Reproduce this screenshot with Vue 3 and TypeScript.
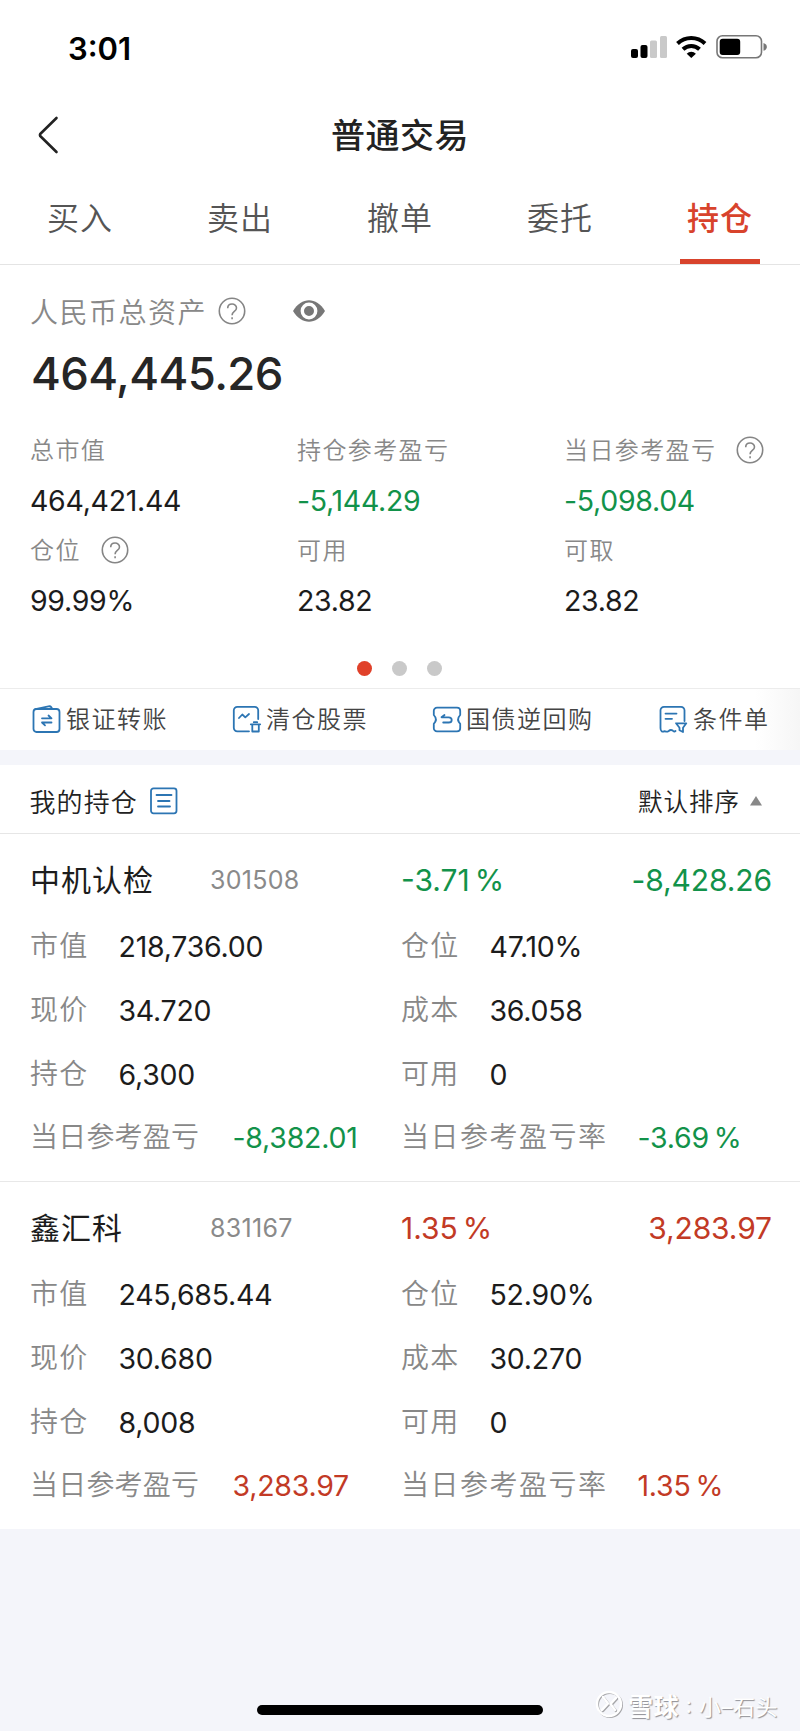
<script setup lang="ts">
interface Stat {
  label: string
  value: string
  help?: boolean
  down?: boolean
}
interface Holding {
  name: string
  code: string
  rate: string
  profit: string
  tone: 'up' | 'down'
  rows: [string, string, string, string][]
  dayProfit: string
  dayRate: string
}

const tabs = ['买入', '卖出', '撤单', '委托', '持仓']
const activeTab = '持仓'

const stats: Stat[] = [
  { label: '总市值', value: '464,421.44' },
  { label: '持仓参考盈亏', value: '-5,144.29', down: true },
  { label: '当日参考盈亏', value: '-5,098.04', help: true, down: true },
  { label: '仓位', value: '99.99%', help: true },
  { label: '可用', value: '23.82' },
  { label: '可取', value: '23.82' },
]

const holdings: Holding[] = [
  {
    name: '中机认检',
    code: '301508',
    rate: '-3.71',
    profit: '-8,428.26',
    tone: 'down',
    rows: [
      ['市值', '218,736.00', '仓位', '47.10%'],
      ['现价', '34.720', '成本', '36.058'],
      ['持仓', '6,300', '可用', '0'],
    ],
    dayProfit: '-8,382.01',
    dayRate: '-3.69',
  },
  {
    name: '鑫汇科',
    code: '831167',
    rate: '1.35',
    profit: '3,283.97',
    tone: 'up',
    rows: [
      ['市值', '245,685.44', '仓位', '52.90%'],
      ['现价', '30.680', '成本', '30.270'],
      ['持仓', '8,008', '可用', '0'],
    ],
    dayProfit: '3,283.97',
    dayRate: '1.35',
  },
]
</script>

<template>
  <main class="screen">
    <div class="status">
      <span class="clock">3:01</span>
      <svg class="status-icons" width="138" height="26" viewBox="0 0 138 26">
        <rect x="1" y="14" width="7" height="9" rx="2" />
        <rect x="10.500" y="10" width="7" height="13" rx="2" />
        <rect x="20" y="5.500" width="7" height="17.500" rx="1.500" fill="#c9c9c9" />
        <rect x="30" y="1" width="7" height="22" rx="1.500" fill="#c9c9c9" />
        <g fill="none" stroke="#000" stroke-width="4">
          <path d="M47.500 8.500a20 20 0 0 1 27.500 0" />
          <path d="M53 14.200a12 12 0 0 1 16.500 0" />
        </g>
        <path d="M56.700 18.700a6.500 6.500 0 0 1 9.200 0L61.300 23z" />
        <rect x="87" y="0.800" width="44.500" height="22" rx="5.500" fill="#fff" stroke="#777" stroke-width="1.600" />
        <rect x="89.700" y="3.800" width="20.500" height="16.200" rx="3" />
        <path d="M133.500 8c4.500 1.200 4.500 6.600 0 7.800z" fill="#777" />
      </svg>
    </div>

    <header class="nav">
      <svg class="back" width="22" height="40" viewBox="0 0 22 40">
        <path d="M19.500 3 3.200 19a2 2 0 0 0 0 2L19.500 37" fill="none" stroke="#222" stroke-width="2.600" stroke-linecap="round" stroke-linejoin="round" />
      </svg>
      <h1>普通交易</h1>
    </header>

    <nav class="tabs">
      <div v-for="t in tabs" :key="t" class="tab" :class="{ active: t === activeTab }">
        <span>{{ t }}</span>
      </div>
    </nav>

    <section class="assets">
      <div class="asset-title">
        <span>人民币总资产</span>
        <svg class="help" width="28" height="28" viewBox="0 0 28 28">
          <circle cx="14" cy="14" r="12.700" />
          <path d="M9.700 11.200c0-5.600 8.800-5.400 8.800-.2 0 3.600-4.400 3.400-4.400 7.200M14.100 20.300v2" />
        </svg>
        <svg class="eye" width="34" height="24" viewBox="0 0 34 24">
          <path d="M1 12C9.500-2.300 24.500-2.300 33 12 24.500 26.300 9.500 26.300 1 12z" fill="#777" />
          <circle cx="17" cy="12" r="6.700" fill="#777" stroke="#fff" stroke-width="3.400" />
        </svg>
      </div>
      <div class="total">464,445.26</div>
      <div class="stats">
        <div v-for="s in stats" :key="s.label" class="stat">
          <div class="stat-label">
            <span>{{ s.label }}</span>
            <svg v-if="s.help" class="help" width="28" height="28" viewBox="0 0 28 28">
              <circle cx="14" cy="14" r="12.700" />
              <path d="M9.700 11.200c0-5.600 8.800-5.400 8.800-.2 0 3.600-4.400 3.400-4.400 7.200M14.100 20.300v2" />
            </svg>
          </div>
          <div class="stat-value" :class="{ down: s.down }">{{ s.value }}</div>
        </div>
      </div>
      <div class="dots"><i class="on"></i><i></i><i></i></div>
    </section>

    <section class="actions">
      <div class="action">
        <svg width="30" height="30" viewBox="0 0 30 30">
          <rect x="1.500" y="4" width="26" height="23" rx="3" />
          <path d="M3.500 4.200 16.500 1.300q2-.3 2.800 1l1 1.700M10 13.300h9.500l-3-2.800M19.500 17.500h-9.500l3 2.800" />
        </svg>
        <span>银证转账</span>
      </div>
      <div class="action">
        <svg width="30" height="30" viewBox="0 0 30 30">
          <path d="M17 26.300H5.300a3.500 3.500 0 0 1-3.500-3.500V5.300a3.500 3.500 0 0 1 3.500-3.500h17.400a3.500 3.500 0 0 1 3.500 3.500V14M7 13l3.300-3.500 3 2.800 3.700-3.300" />
          <path d="M18.800 19.300h9.400M21.800 17.200h3.400M20.300 19.500v7h6.500v-7" />
        </svg>
        <span>清仓股票</span>
      </div>
      <div class="action">
        <svg width="30" height="30" viewBox="0 0 30 30">
          <path d="M5 2.600h20a3.200 3.200 0 0 1 3.200 3.200V10q-4.200 4.400 0 8.800v4.400a3.200 3.200 0 0 1-3.200 3.200H5a3.200 3.200 0 0 1-3.200-3.200v-4.400q4.200-4.400 0-8.800V5.800A3.200 3.200 0 0 1 5 2.600z" />
          <path d="M12.500 10 9.500 12.300h7.200c4 0 4 5.200 0 5.200h-5.500" />
        </svg>
        <span>国债逆回购</span>
      </div>
      <div class="action">
        <svg width="30" height="30" viewBox="0 0 30 30">
          <path d="M16.500 26q-1.200 1.200-2.800-.4-2 -1.400-4 .4-1.900 1.300-3.700.2Q1.500 28 1.500 23V5.300A3.500 3.500 0 0 1 5 1.800h17a3.500 3.500 0 0 1 3.500 3.500V16M6.500 8.600h11M6.500 13.800H13" />
          <path d="M17 18.300h10.300l-3.300 4.400V27l-3.500-1.800v-2.500z" />
        </svg>
        <span>条件单</span>
      </div>
    </section>

    <section class="list-head">
      <span class="list-title">我的持仓</span>
      <svg class="list-icon" width="28" height="28" viewBox="0 0 28 28">
        <rect x="1" y="1.300" width="25.500" height="25" rx="2.500" />
        <path d="M6.500 8h15M8 14h11.500M8 19.500h12" />
      </svg>
      <span class="sort">默认排序</span>
      <svg width="12" height="10" viewBox="0 0 12 10"><path d="M6 0l6 9.500H0z" fill="#888" /></svg>
    </section>

    <section v-for="h in holdings" :key="h.code" class="holding">
      <div class="row head">
        <div class="half">
          <span class="name">{{ h.name }}</span>
          <span class="code">{{ h.code }}</span>
        </div>
        <div class="half" :class="h.tone">
          <span>{{ h.rate }}<i class="pct">%</i></span>
          <span class="profit">{{ h.profit }}</span>
        </div>
      </div>
      <div v-for="r in h.rows" :key="r[0]" class="row">
        <div class="half"><label>{{ r[0] }}</label><span>{{ r[1] }}</span></div>
        <div class="half"><label>{{ r[2] }}</label><span>{{ r[3] }}</span></div>
      </div>
      <div class="row day">
        <div class="half"><label>当日参考盈亏</label><span :class="h.tone">{{ h.dayProfit }}</span></div>
        <div class="half">
          <label>当日参考盈亏率</label><span :class="h.tone">{{ h.dayRate }}<i class="pct">%</i></span>
        </div>
      </div>
    </section>

    <footer class="bottom">
      <div class="indicator"></div>
      <div class="mark">
        <svg width="30" height="30" viewBox="0 0 30 30">
          <g fill="none" stroke-linecap="round" stroke-linejoin="round">
            <g stroke="#a5a5a8" transform="translate(1 1)">
              <circle cx="14" cy="14" r="12" stroke-width="2" />
              <path d="M8 7l5 6.500L7 20M21 8l-5.500 6L20 20" stroke-width="2.500" />
            </g>
            <g stroke="#fff">
              <circle cx="14" cy="14" r="12" stroke-width="2.400" />
              <path d="M8 7l5 6.500L7 20M21 8l-5.500 6L20 20" stroke-width="2.500" />
            </g>
          </g>
        </svg>
        <b>雪球</b><span class="colon">:</span><span>小–石头</span>
      </div>
    </footer>
  </main>
</template>

<style>
html,
body {
  margin: 0;
  background: #f4f5fa;
}
</style>

<style scoped>
.screen {
  width: 800px;
  height: 1731px;
  display: flex;
  flex-direction: column;
  overflow: hidden;
  background: #f4f5fa;
  color: #1c1c1c;
  font-family: Inter, "Noto Sans CJK SC", sans-serif;
  font-weight: 400;
}
.screen * {
  box-sizing: border-box;
}
.status,
.nav,
.tabs,
.assets,
.actions,
.list-head,
.holding {
  background: #fff;
  flex: none;
}
.status {
  height: 96px;
  display: flex;
  align-items: center;
  justify-content: space-between;
  padding: 0 32px 0 68px;
}
.clock {
  font-size: 31px;
  font-weight: 600;
  color: #000;
}
.nav {
  height: 79px;
  display: flex;
  align-items: center;
  justify-content: center;
  position: relative;
}
.back {
  position: absolute;
  left: 37px;
  top: 19px;
}
h1 {
  margin: 0;
  font-size: 34px;
  font-weight: 500;
  line-height: 40px;
  letter-spacing: 0.5px;
  color: #222;
}
.tabs {
  height: 90px;
  display: flex;
  border-bottom: 1px solid #e4e4e4;
}
.tab {
  flex: 1;
  display: flex;
  justify-content: center;
  position: relative;
  font-size: 32px;
  line-height: 88px;
  letter-spacing: 1px;
  font-weight: 350;
  color: #555;
}
.tab.active {
  color: #d8432c;
  font-weight: 500;
}
.tab.active::after {
  content: "";
  position: absolute;
  left: 40px;
  right: 40px;
  bottom: 0;
  height: 5px;
  background: #d8432c;
}
.assets {
  height: 423px;
  padding: 24px 0 0 30px;
}
.asset-title {
  display: flex;
  align-items: center;
  height: 44px;
  font-size: 28px;
  font-weight: 350;
  letter-spacing: 1.5px;
  color: #888;
}
.asset-title .help {
  margin-left: 11px;
}
.help {
  fill: none;
  stroke: #858585;
  stroke-width: 1.6;
}
.eye {
  margin-left: 46px;
}
.total {
  height: 80px;
  line-height: 81px;
  padding-left: 1px;
  font-size: 45.5px;
  font-weight: 500;
  letter-spacing: -0.6px;
  color: #262626;
}
.stats {
  display: grid;
  grid-template-columns: 267px 267px 236px;
  grid-auto-rows: 100px;
  margin-top: 12px;
}
.stat-label {
  display: flex;
  align-items: center;
  gap: 20px;
  height: 50px;
  font-size: 24px;
  font-weight: 350;
  letter-spacing: 1.4px;
  color: #888;
}
.stat-label span {
  margin-top: -3px;
}
.stat-value {
  height: 50px;
  line-height: 52px;
  font-size: 28.5px;
  letter-spacing: -0.3px;
}
.dots {
  display: flex;
  justify-content: center;
  gap: 20px;
  margin: 36px 31px 0 0;
}
.dots i {
  width: 15px;
  height: 15px;
  border-radius: 50%;
  background: #c9c9c9;
}
.dots i.on {
  background: #e0412a;
}
.actions {
  height: 62px;
  border-top: 1px solid #ececec;
  display: flex;
  align-items: center;
  padding-left: 32px;
  font-size: 24px;
  letter-spacing: 1.5px;
  font-weight: 350;
  color: #444;
  background: linear-gradient(90deg, #fff 755px, #f6f6f6 800px);
}
.action {
  display: flex;
  align-items: center;
  gap: 4px;
  width: 200px;
  flex: none;
}
.action span {
  margin-top: -4px;
}
.action:nth-child(3) {
  width: 227px;
}
.action:nth-child(4) {
  width: auto;
}
.action svg,
.list-icon {
  fill: none;
  stroke: #2c75b3;
  stroke-width: 1.8;
  stroke-linejoin: round;
  stroke-linecap: round;
}
.list-head {
  height: 69px;
  margin-top: 15px;
  border-bottom: 1px solid #e6e6e6;
  display: flex;
  align-items: center;
  padding: 4px 38px 0 29.5px;
  font-weight: 350;
  color: #222;
}
.list-title {
  margin-top: -2px;
  font-size: 26px;
  letter-spacing: 1.1px;
}
.list-icon {
  margin-left: 12px;
}
.sort {
  margin-top: -2px;
  margin-left: auto;
  margin-right: 10px;
  font-size: 24.5px;
  letter-spacing: 1px;
}
.holding {
  height: 347px;
  padding: 14px 30px 0;
}
.holding + .holding {
  border-top: 1px solid #e8e8e8;
  height: 348px;
}
.row {
  display: flex;
  height: 63.800px;
  line-height: 63px;
  font-size: 28.5px;
}
.half {
  display: flex;
  width: 371px;
  flex: none;
  white-space: nowrap;
}
.row:not(.head) .half {
  letter-spacing: -0.25px;
}
label {
  width: 88.5px;
  flex: none;
  font-size: 28px;
  font-weight: 350;
  letter-spacing: 1.2px;
  color: #888;
}
.half > label {
  letter-spacing: 1.2px;
}
.day .half > label {
  width: 202.5px;
  letter-spacing: 0.2px;
}
.day .half + .half > label {
  width: 236.5px;
  letter-spacing: 1.5px;
}
.head {
  height: 67px;
  line-height: 65px;
  font-size: 30px;
}
.name {
  width: 180px;
  font-size: 30px;
  letter-spacing: 1px;
}
.code {
  font-size: 25px;
  letter-spacing: 0.3px;
  color: #8a8a8a;
}
.profit {
  margin-left: auto;
  letter-spacing: -0.1px;
}
.pct {
  font-style: normal;
  margin-left: 5px;
}
.down {
  color: #12924a;
}
.up {
  color: #c23a25;
}
.bottom {
  flex: 1;
  position: relative;
}
.indicator {
  position: absolute;
  left: 257px;
  bottom: 16px;
  width: 286px;
  height: 10px;
  border-radius: 5px;
  background: #000;
}
.mark {
  position: absolute;
  left: 595px;
  bottom: 9px;
  height: 34px;
  display: flex;
  align-items: center;
  white-space: nowrap;
  font-size: 22px;
  letter-spacing: 0.5px;
  color: #fff;
  text-shadow: 1px 1px 1px #8f8f94;
}
.mark b {
  font-size: 25px;
  font-weight: 700;
  margin-left: 3px;
}
.colon {
  width: 20px;
  text-align: center;
}
</style>
